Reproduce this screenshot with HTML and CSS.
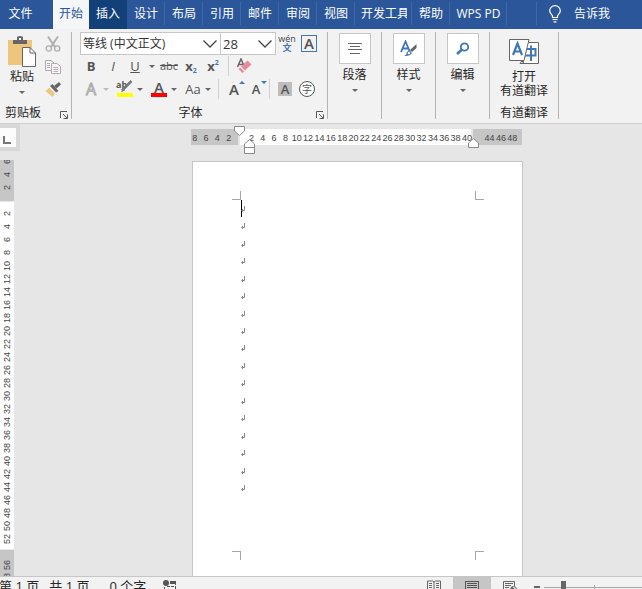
FILE: index.html
```html
<!DOCTYPE html>
<html lang="zh-CN">
<head>
<meta charset="utf-8">
<title>文档</title>
<link rel="stylesheet" href="styles.css">
</head>
<body>
<div class="app">
  <nav class="tabs">
    <a class="tab file" href="#">文件</a>
    <a class="tab active" href="#">开始</a>
    <a class="tab hover" href="#">插入</a>
    <a class="tab" href="#">设计</a>
    <a class="tab" href="#">布局</a>
    <a class="tab" href="#">引用</a>
    <a class="tab" href="#">邮件</a>
    <a class="tab" href="#">审阅</a>
    <a class="tab" href="#">视图</a>
    <a class="tab wide" href="#"><span class="clip">开发工具</span></a>
    <a class="tab" href="#">帮助</a>
    <a class="tab wide" href="#">WPS PD</a>
    <span class="tab-gap"></span>
    <a class="tell" href="#">
      <svg width="12" height="18" viewBox="0 0 12 18" fill="none" stroke="#fff" stroke-width="1.2"><path d="M3.5 12.5V11C3 9.500.7 8.500.7 5.800A5.300 5.200 0 0 1 11.300 5.800C11.300 8.500 9 9.500 8.500 11V12.500ZM3.500 14.500H8.500M4.500 16.800H7.500"/></svg>
      告诉我</a>
  </nav>

  <div class="ribbon">
    <section class="group clipboard">
      <div class="clip-tools">
        <button class="big">
          <svg width="28" height="32" viewBox="0 0 28 32"><path d="M0 4H24V29H0Z" fill="#edc57c"/><path d="M5 4H9V1.500Q9 0 12 0T15 1.500V4H19V8H5Z" fill="#666"/><path d="M11 2H13V4H11Z" fill="#fff"/><path d="M14.500 11.500H22L27.500 17V30.500H14.500Z" fill="#fff" stroke="#666"/><path d="M22 11.500V17H27.500" fill="none" stroke="#666"/></svg>
          <span>粘贴</span>
          <i class="caret"></i>
        </button>
        <div class="stack">
          <button aria-label="剪切"><svg width="16" height="16" viewBox="0 0 16 16" fill="none" stroke="#b0b0b0"><path d="M3 .5 10 11M13 .5 6 11" stroke-width="2"/><circle cx="3.800" cy="12.500" r="2.600" stroke-width="1.400"/><circle cx="12.200" cy="12.500" r="2.600" stroke-width="1.400"/></svg></button>
          <button aria-label="复制"><svg width="16" height="16" viewBox="0 0 16 16" fill="#f8f4f8" stroke="#b3adb3"><path d="M.5 1.500H6L9.500 4.500V11.500H.5Z"/><path d="M2 4.500H5M2 6.500H5M2 8.500H5"/><path d="M6.500 4.500H12L15.500 7.500V14.500H6.500Z"/><path d="M8.500 8.500H13M8.500 10.500H13M8.500 12.500H13"/></svg></button>
          <button aria-label="格式刷"><svg width="16" height="16" viewBox="0 0 16 16"><path d="M14 0 16 2.500 11.500 6.500 9 4Z" fill="#666"/><path d="M5 4 7.500 2 13.500 9 11 10.500Z" fill="#666"/><path d="M4 5.500 10 11.500 7.500 15 0 8.500Q3 8 4 5.500Z" fill="#edc57c"/></svg></button>
        </div>
      </div>
      <div class="label">剪贴板<button class="launcher" aria-label="剪贴板选项"><svg width="8" height="8" viewBox="0 0 8 8" fill="none" stroke="#555"><path d="M.5 7V.5H7M3 3 7 7M7.500 3.500V7.500H3.500"/></svg></button></div>
    </section>

    <section class="group font">
      <div class="row first">
        <div class="combo family"><select aria-label="字体"><option>等线 (中文正文)</option></select><svg width="14" height="8" viewBox="0 0 14 8"><path d="M.5.5 7 7 13.500.5"/></svg></div>
        <div class="combo size"><select aria-label="字号"><option>28</option></select><svg width="14" height="8" viewBox="0 0 14 8"><path d="M.5.5 7 7 13.500.5"/></svg></div>
        <button class="cell pinyin"><span>wén</span><b>文</b></button>
        <button class="cell"><span class="boxed">A</span></button>
      </div>
      <div class="row second">
        <button class="cell"><b>B</b></button>
        <button class="cell"><em>I</em></button>
        <button class="cell"><u>U</u></button>
        <button class="drop" aria-label="下划线样式"><i class="caret"></i></button>
        <button class="cell strike"><s>abc</s></button>
        <button class="cell"><b>x</b><small class="low">2</small></button>
        <button class="cell"><b>x</b><small class="high">2</small></button>
        <span class="rule"></span>
        <button class="cell" aria-label="清除格式"><svg width="15" height="16" viewBox="0 0 15 16"><path d="M.5 9 4 1 7.500 9M2 6.500H6" fill="none" stroke="#666" stroke-width="1.500"/><path d="M10.500 2.500 14.500 6.500 8 12.500 4 8.500Z" fill="#e8899b"/><path d="M3.200 9.400 7.200 13.400 5.500 15 1.500 11Z" fill="#e8899b"/></svg></button>
      </div>
      <div class="row third">
        <button class="cell glow">A</button><button class="drop" aria-label="文本效果"><i class="caret pale"></i></button>
        <button class="cell" aria-label="突出显示"><svg width="18" height="18" viewBox="0 0 18 18"><text x="0" y="8" class="mini">ab</text><path d="M15.500 1 6 10.500" stroke="#777" stroke-width="2.500"/><path d="M7 8 9 10.500 5 12Z" fill="#777"/><path d="M1 13H17V17H1Z" fill="#ff0"/></svg></button><button class="drop" aria-label="突出显示颜色"><i class="caret"></i></button>
        <button class="cell"><span class="red">A</span></button><button class="drop" aria-label="字体颜色"><i class="caret"></i></button>
        <button class="cell">Aa</button><button class="drop" aria-label="更改大小写"><i class="caret"></i></button>
        <span class="rule"></span>
        <button class="cell grow">A<i class="up"></i></button>
        <button class="cell shrink">A<i class="down"></i></button>
        <span class="rule"></span>
        <button class="cell"><span class="shade">A</span></button>
        <button class="cell"><span class="ring">字</span></button>
      </div>
      <div class="label">字体<button class="launcher" aria-label="字体选项"><svg width="8" height="8" viewBox="0 0 8 8" fill="none" stroke="#555"><path d="M.5 7V.5H7M3 3 7 7M7.500 3.500V7.500H3.500"/></svg></button></div>
    </section>

    <section class="group narrow"><button class="big">
      <span class="tile"><svg width="14" height="12" viewBox="0 0 14 12" stroke="#666"><path d="M0 .5H14M2 3.500H12M0 6.500H14M2 10.500H12"/></svg></span>
      <span>段落</span><i class="caret"></i></button></section>
    <section class="group narrow"><button class="big">
      <span class="tile"><svg width="17" height="17" viewBox="0 0 17 17"><path d="M1 12 5.500 1.500 10 12M2.500 8.500H8.500" fill="none" stroke="#3e78b5" stroke-width="1.800"/><path d="M16.500 4V8L12 12 10 10Z" fill="#666"/><path d="M9 10 12 13Q10 16.500 4 16 7 14.500 6.500 12.500Z" fill="#3e78b5"/><circle cx="9" cy="13" r="1.300" fill="#fff"/></svg></span>
      <span>样式</span><i class="caret"></i></button></section>
    <section class="group narrow"><button class="big">
      <span class="tile"><svg width="14" height="14" viewBox="0 0 14 14" fill="none" stroke="#3e78b5"><circle cx="8.500" cy="5" r="3.700" stroke-width="1.800"/><path d="M6 7.500 1 12" stroke-width="2.500"/></svg></span>
      <span>编辑</span><i class="caret"></i></button></section>
    <section class="group youdao">
      <button class="big">
        <svg width="30" height="25" viewBox="0 0 30 25"><path d="M18 3.500H29.500V24.500H11L16 18Z" fill="#fff" stroke="#666"/><path d="M.5.5H20L15 21.500H.5Z" fill="#fff" stroke="#666"/><path d="M10.500 21.500H15V24.500Z" fill="#666"/><path d="M4 16 8.500 4.500 13 16M5.500 12.500H11.500" fill="none" stroke="#3e78b5" stroke-width="2.200"/><path d="M18 10H26.500V16.500H17M22 6.500V22" fill="none" stroke="#3e78b5" stroke-width="2"/></svg>
        <span>打开<br>有道翻译</span>
      </button>
      <div class="label">有道翻译</div>
    </section>
  </div>

  <main class="work">
    <div class="side">
      <button class="corner" aria-label="制表符"><i></i></button>
      <div class="vruler"><div class="vmarks" id="vmarks"></div></div>
    </div>
    <div class="canvas">
      <div class="hruler">
        <div class="hmarks" id="hmarks"></div>
        <svg class="first-line" width="11" height="10" viewBox="0 0 11 10"><path d="M.5.5H10.500V5L5.500 9.500.5 5Z"/></svg>
        <svg class="hanging" width="11" height="15" viewBox="0 0 11 15"><path d="M.5 14.500V5L5.500.5 10.500 5V14.500ZM.5 8.500H10.500"/></svg>
        <svg class="right-indent" width="11" height="10" viewBox="0 0 11 10"><path d="M.5 9.500V5L5.500.5 10.500 5V9.500Z"/></svg>
      </div>
      <article class="page">
        <i class="crop tl"></i><i class="crop tr"></i><i class="crop bl"></i><i class="crop br"></i>
        <div class="text" id="text"></div>
      </article>
    </div>
  </main>

  <footer class="status">
    <span class="pages">第 1 页 , 共 1 页</span>
    <span>0 个字</span>
    <svg class="macro" width="13" height="13" viewBox="0 0 13 13"><circle cx="3" cy="3" r="3" fill="#555"/><path d="M7 1H13V4H7Z" fill="#555"/><path d="M1.500 7V12.500H12.500V4M4 6.500H11M4 9.500H11" fill="none" stroke="#555" stroke-dasharray="3 1"/></svg>
    <div class="views">
      <button class="view" aria-label="阅读视图"><svg width="14" height="12" viewBox="0 0 14 12" fill="none" stroke="#666"><path d="M.5 1V10.500H5.500L7 12 8.500 10.500H13.500V1H8.500L7 2 5.500 1ZM7 2V12M2 3.500H5M2 5.500H5M2 7.500H5M9 3.500H12M9 5.500H12M9 7.500H12"/></svg></button>
      <button class="view on" aria-label="页面视图"><svg width="14" height="12" viewBox="0 0 14 12" fill="none" stroke="#555"><path d="M.5 1V12M13.500 1V12M0 1.500H14M2 3.500H12M2 5.500H12M2 7.500H12M2 9.500H12"/></svg></button>
      <button class="view" aria-label="Web 版式"><svg width="14" height="12" viewBox="0 0 14 12" fill="none" stroke="#666"><path d="M.5 12V1.500H11.500V6M2 3.500H10M2 5.500H8M2 7.500H6"/><circle cx="10.500" cy="9.500" r="3"/><path d="M9 7Q12 8 10 12L8 9Z" fill="#666"/></svg></button>
    </div>
    <button class="minus" aria-label="缩小"></button>
    <input class="zoom" type="range" min="0" max="100" value="18" aria-label="显示比例">
  </footer>
</div>
<script src="app.js"></script>
</body>
</html>
```
FILE: styles.css
```css
* { box-sizing: border-box; }
body {
  margin: 0;
  font: 12px/14px "Open Sans", "Noto Sans CJK SC", sans-serif;
  color: #262626;
}
button {
  margin: 0; padding: 0; border: 0; background: none;
  font: inherit; color: inherit;
}
a { color: inherit; text-decoration: none; }
svg { display: block; flex: none; }
.app { display: flex; flex-direction: column; height: 100vh; overflow: hidden; background: #e6e6e6; }

/* tab strip */
.tabs { display: flex; flex: none; height: 29px; background: #2b579a; color: #fff; line-height: 27px; overflow: hidden; white-space: nowrap; }
.tab { position: relative; flex: none; width: 38px; text-align: center; }
.tab::after { content: ""; position: absolute; right: 0; top: 2px; bottom: 4px; width: 1px; background: #3f68a6; }
.file { width: 53px; padding-right: 12px; }
.file::after, .active::after, .hover::after { display: none; }
.active { width: 36px; background: #f5f6f7; color: #2b579a; }
.hover { width: 38px; background: #124078; }
.wide { width: 57px; }
.clip { display: block; width: 46px; margin-left: 6px; overflow: hidden; text-align: left; }
.tab-gap { flex: none; width: 30px; height: 23px; margin-top: 2px; border-right: 1px solid #3f68a6; }
.tell { display: flex; gap: 13px; margin-left: 12px; }
.tell svg { margin-top: 5px; }

/* ribbon */
.ribbon { display: flex; flex: none; height: 95px; padding: 3px 0 4px; background: #f2f2f2; border-bottom: 1px solid #cfcfcf; }
.group { display: flex; flex-direction: column; flex: none; border-right: 1px solid #b4b4b4; }
.label { position: relative; height: 14px; margin-top: auto; text-align: center; line-height: 16px; }
.launcher { position: absolute; right: 3px; bottom: 0; }
.caret { display: block; flex: none; border: 3px solid transparent; border-top-color: #666; border-bottom: 0; }
.pale { border-top-color: #bbb; }
.big { display: flex; flex-direction: column; align-items: center; }

.clipboard { width: 72px; }
.clip-tools { display: flex; gap: 9px; padding: 4px 0 0 8px; }
.clip-tools .big { gap: 2px; }
.clip-tools .caret { margin-top: 5px; }
.stack { display: flex; flex-direction: column; gap: 7px; }
.clipboard .label { padding-right: 25px; }

.font { width: 256px; padding-left: 8px; color: #555; }
.font .label { padding-right: 26px; color: #262626; }
.row { display: flex; align-items: center; height: 23px; }
.combo { position: relative; display: flex; align-items: center; height: 23px; background: #fff; border: 1px solid #c6c6c6; }
.combo select { width: 100%; height: 21px; padding: 0 2px; border: 0; background: none; appearance: none; font: inherit; color: #333; }
.combo svg { position: absolute; right: 3px; fill: none; stroke: #444; stroke-width: 1.3; pointer-events: none; }
.family { width: 141px; }
.size { width: 56px; margin-left: -1px; }
.size select { font-size: 13px; }
.cell { position: relative; display: flex; align-items: center; justify-content: center; flex: none; width: 22px; height: 22px; font-size: 13px; }
.drop { flex: none; width: 12px; display: flex; justify-content: center; }
.pinyin { flex-direction: column; font-size: 9px; line-height: 8px; color: #444; }
.pinyin b { color: #3e78b5; font-size: 9px; line-height: 10px; }
.boxed { width: 16px; height: 17px; border: 1px solid #3e78b5; font-size: 15px; line-height: 15px; font-weight: 600; }
.second { height: 22px; }
.strike { font-size: 11px; }
.cell small { font-size: 7px; font-weight: 700; color: #3e78b5; }
.low { padding-top: 9px; }
.high { padding-bottom: 6px; }
.rule { width: 1px; height: 20px; margin: 0 4px; background: #d0d0d0; }
.third { height: 24px; }
.third .drop { width: 8px; margin-right: 4px; }
.third .rule { margin: 0 4px 0 2px; }
.glow { font-size: 16px; color: #fff; -webkit-text-stroke: 1px #aaa; }
.mini { font: 700 9px "Open Sans", sans-serif; fill: #555; }
.red { width: 16px; height: 16px; border-bottom: 4px solid #f00; font-size: 15px; line-height: 13px; font-weight: 600; }
.grow { font-size: 15px; font-weight: 600; }
.shrink { font-size: 13px; font-weight: 600; }
.up, .down { position: absolute; right: 0; top: 3px; border: 3px solid transparent; }
.up { border-bottom-color: #3e78b5; border-top: 0; }
.down { border-top-color: #3e78b5; border-bottom: 0; }
.shade { width: 14px; height: 14px; background: #bdbdbd; font-weight: 600; line-height: 14px; }
.ring { width: 16px; height: 16px; border: 1px solid #555; border-radius: 50%; background: #fff; font-size: 10px; line-height: 14px; }

.narrow { width: 54px; padding-top: 1px; align-items: center; }
.tile { display: flex; align-items: center; justify-content: center; width: 32px; height: 31px; margin-bottom: 4px; background: #fff; border: 1px solid #c6c6c6; }
.narrow .caret { margin-top: 7px; }
.youdao { width: 69px; padding-top: 7px; }
.youdao .big { gap: 6px; }

/* workspace */
.work { display: flex; flex: 1; min-height: 0; }
.side { flex: none; width: 20px; display: flex; flex-direction: column; }
.corner { flex: none; height: 27px; padding: 4px 4px 4px 0; background: #d8d8d8; }
.corner i { display: block; height: 19px; background: #fcfcfc; padding: 8px 0 0 3px; }
.corner i::before { content: ""; display: block; width: 6px; height: 6px; border: solid #777; border-width: 0 0 2px 2px; }
.vruler { flex: 1; width: 14px; margin-top: 9px; overflow: hidden; background: linear-gradient(#c6c6c6 41px, #e6e6e6 41px 42px, #fff 42px calc(100% - 27px), #e6e6e6 calc(100% - 27px) calc(100% - 26px), #c6c6c6 calc(100% - 26px)); }
.vmarks { margin-top: -5px; }
.vmarks span { display: flex; align-items: center; justify-content: center; width: 14px; height: 13px; writing-mode: vertical-rl; transform: rotate(180deg); }
.vmarks, .hmarks { font: 9px/13px "Liberation Sans", sans-serif; color: #444; white-space: nowrap; }
.canvas { flex: 1; display: flex; flex-direction: column; padding: 5px 120px 0 171px; }
.hruler { position: relative; flex: none; height: 16px; background: linear-gradient(90deg, #c6c6c6 47px, #e6e6e6 47px 49px, #fff 49px calc(100% - 51px), #e6e6e6 calc(100% - 51px) calc(100% - 49px), #c6c6c6 calc(100% - 49px)); }
.hmarks { display: flex; height: 18px; align-items: center; margin: 0 4px 0 -2px; }
.hmarks span { flex: 1 1 0; min-width: 0; display: flex; justify-content: center; }
.hruler svg { position: absolute; fill: #fff; stroke: #8a8a8a; }
.first-line { left: 43px; top: -3px; }
.hanging { left: 53px; top: 10px; }
.right-indent { right: 43px; top: 9px; }
.page { position: relative; flex: 1; display: flex; margin: 16px -1px 0 1px; padding: 38px 48px 79px; background: #fff; border: 1px solid #c6c6c6; border-bottom: 0; }
.crop { position: absolute; width: 9px; height: 9px; border: 0 solid #a6a6a6; }
.tl { left: 39px; top: 29px; border-width: 0 1px 1px 0; }
.tr { right: 38px; top: 29px; border-width: 0 0 1px 1px; }
.bl { left: 39px; bottom: 16px; border-width: 1px 1px 0 0; }
.br { right: 38px; bottom: 16px; border-width: 1px 0 0 1px; }
.text { flex: 1; display: flex; flex-direction: column; }
.text p { flex: 1; display: flex; align-items: center; margin: 0; }
.text p:first-child { border-left: 1px solid #000; }
.text p:first-child svg { margin-left: -1px; }

/* status bar */
.status { display: flex; flex: none; height: 13px; overflow: hidden; background: #f2f2f2; border-top: 1px solid #c6c6c6; white-space: nowrap; font-size: 13px; line-height: 18px; }
.pages { margin: 0 20px 0 -1px; }
.macro { margin: 3px 0 0 17px; }
.views { display: flex; margin-left: auto; }
.view { width: 38px; height: 12px; padding: 3px 12px 0; overflow: hidden; }
.view.on { background: #c6c6c6; }
.minus { width: 6px; height: 2px; margin: 9px 4px 0 5px; background: #666; }
.zoom { flex: none; width: 98px; height: 16px; margin: 3px 0 0; appearance: none; background: linear-gradient(#a6a6a6, #a6a6a6) 50px 5px / 1px 7px no-repeat, linear-gradient(#a6a6a6, #a6a6a6) 0 7px / 100% 1px no-repeat; }
.zoom::-webkit-slider-thumb { appearance: none; width: 5px; height: 14px; background: #666; }
```
FILE: app.js
```js
const range = (from, to) => {
  const out = [];
  for (let n = from; n <= to; n += 2) out.push(n);
  return out;
};
const fill = (id, values) => {
  document.getElementById(id).innerHTML = values.map(v => `<span>${v}</span>`).join('');
};
fill('hmarks', [8, 6, 4, 2, '', ...range(2, 40), '', ...range(44, 48)]);
fill('vmarks', [6, 4, 2, '', ...range(2, 52), '', 56, 58]);

const mark = '<p><svg width="4" height="6" viewBox="0 0 4 6" fill="none" stroke="#888"><path d="M3.500 0V4.500H1M2 3 .5 4.500 2 6"/></svg></p>';
document.getElementById('text').innerHTML = mark.repeat(17);
```
